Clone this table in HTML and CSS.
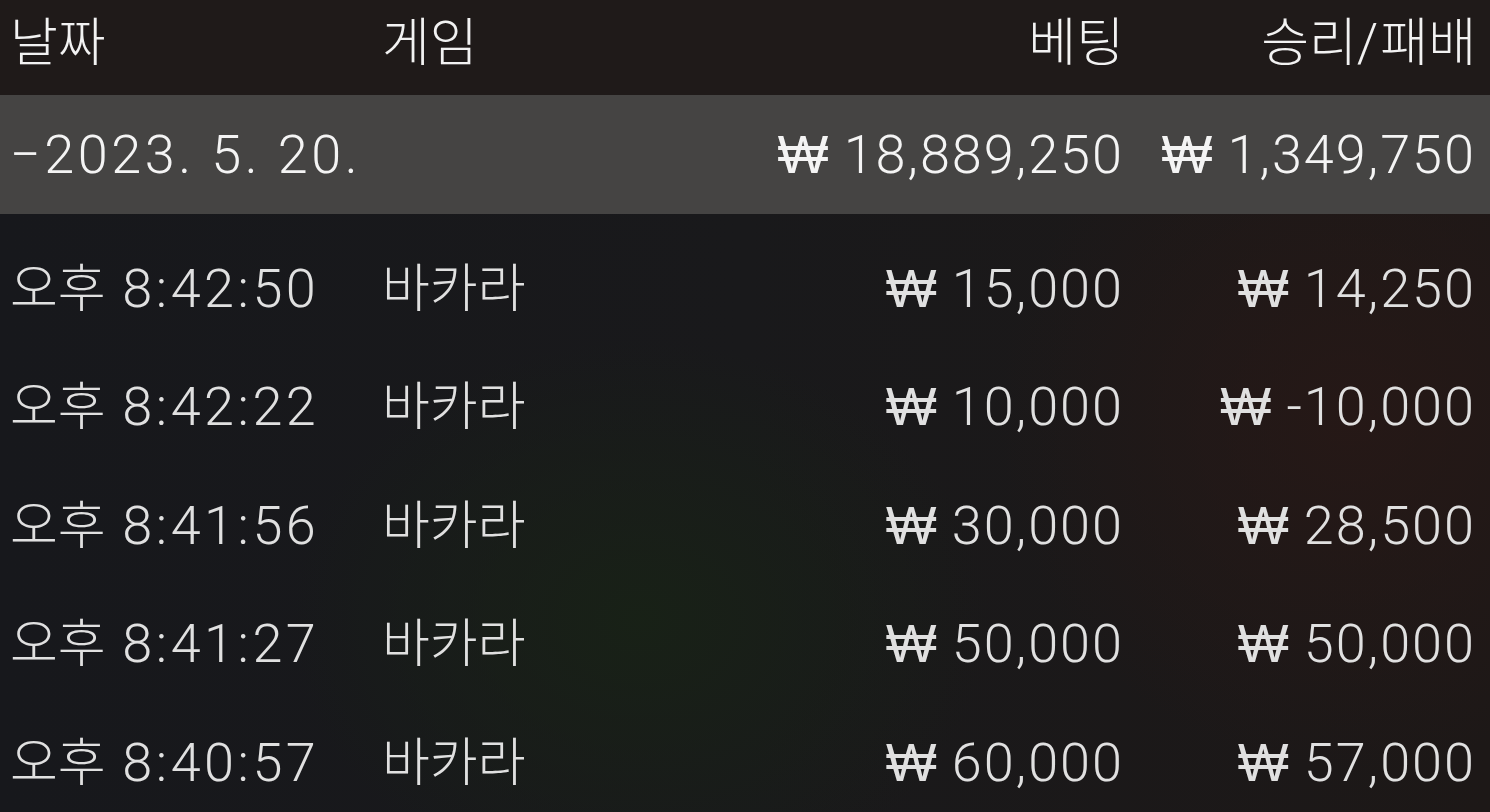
FILE: index.html
```html
<!DOCTYPE html>
<html lang="ko">
<head>
<meta charset="utf-8">
<link rel="stylesheet" href="styles.css">
</head>
<body>
<div class="screen">
  <div class="row head">
    <div class="c date"><span class="ko">날짜</span></div>
    <div class="c game"><span class="ko">게임</span></div>
    <div class="c num"><span class="ko">베팅</span></div>
    <div class="c num"><span class="ko">승리</span>/<span class="ko">패배</span></div>
  </div>
  <div class="row day">
    <div class="c date">−2023. 5. 20.</div>
    <div class="c game"></div>
    <div class="c num"><span class="won">₩</span> 18,889,250</div>
    <div class="c num"><span class="won">₩</span> 1,349,750</div>
  </div>
  <div class="list">
    <div class="row item">
      <div class="c date"><span class="ko">오후</span> 8:42:50</div>
      <div class="c game"><span class="ko">바카라</span></div>
      <div class="c num"><span class="won">₩</span> 15,000</div>
      <div class="c num"><span class="won">₩</span> 14,250</div>
    </div>
    <div class="row item">
      <div class="c date"><span class="ko">오후</span> 8:42:22</div>
      <div class="c game"><span class="ko">바카라</span></div>
      <div class="c num"><span class="won">₩</span> 10,000</div>
      <div class="c num"><span class="won">₩</span> -10,000</div>
    </div>
    <div class="row item">
      <div class="c date"><span class="ko">오후</span> 8:41:56</div>
      <div class="c game"><span class="ko">바카라</span></div>
      <div class="c num"><span class="won">₩</span> 30,000</div>
      <div class="c num"><span class="won">₩</span> 28,500</div>
    </div>
    <div class="row item">
      <div class="c date"><span class="ko">오후</span> 8:41:27</div>
      <div class="c game"><span class="ko">바카라</span></div>
      <div class="c num"><span class="won">₩</span> 50,000</div>
      <div class="c num"><span class="won">₩</span> 50,000</div>
    </div>
    <div class="row item">
      <div class="c date"><span class="ko">오후</span> 8:40:57</div>
      <div class="c game"><span class="ko">바카라</span></div>
      <div class="c num"><span class="won">₩</span> 60,000</div>
      <div class="c num"><span class="won">₩</span> 57,000</div>
    </div>
  </div>
</div>
</body>
</html>
```

FILE: styles.css
```css
html, body {
  margin: 0;
  padding: 0;
}
body {
  width: 1490px;
  height: 812px;
  overflow: hidden;
  background: #18181a;
  font-family: Roboto, "Noto Sans CJK KR", sans-serif;
  font-weight: 300;
  color: #e0e0e0;
}
.screen {
  width: 1490px;
  height: 812px;
  overflow: hidden;
  display: flex;
  flex-direction: column;
  background:
    radial-gradient(ellipse 500px 400px at 640px 620px, rgba(24, 34, 22, 0.9), rgba(24, 34, 22, 0) 70%),
    radial-gradient(ellipse 500px 500px at 1350px 420px, rgba(40, 24, 22, 0.8), rgba(40, 24, 22, 0) 70%),
    linear-gradient(90deg, #17181c 0%, #19191b 50%, #1d1817 100%);
}
.screen > * {
  flex-shrink: 0;
}
.row {
  display: grid;
  grid-template-columns: 372px 1fr 360px 352px;
  padding: 0 16px 0 10px;
  align-items: center;
  font-size: 54px;
  line-height: 1.2;
  letter-spacing: 2px;
  white-space: nowrap;
}
.date {
  letter-spacing: 3.5px;
}
.num {
  text-align: right;
  margin-right: -2px;
}
.ko {
  font-family: "Noto Sans CJK KR", sans-serif;
  font-size: 52px;
  font-weight: 300;
  letter-spacing: 0;
  line-height: 1;
}
.won {
  font-family: "DejaVu Sans", sans-serif;
  font-weight: 200;
  font-size: 54px;
  letter-spacing: 0;
}
.head {
  height: 95px;
  box-sizing: border-box;
  padding-bottom: 17px;
  line-height: 78px;
  background: #1f1a19;
  color: #f2f2f2;
}
.head .ko {
  line-height: 78px;
}
.day {
  height: 119px;
  box-sizing: border-box;
  padding-top: 2px;
  background: #454443;
  color: #f4f4f4;
}
.list {
  padding-top: 16px;
  display: flex;
  flex-direction: column;
}
.item {
  height: 118.5px;
  flex-shrink: 0;
}
```
